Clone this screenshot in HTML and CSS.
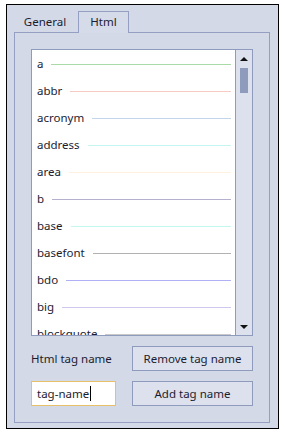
FILE: index.html
```html
<!DOCTYPE html>
<html lang="en">
<head>
    <meta charset="UTF-8">
    <meta name="viewport" content="width=device-width, initial-scale=1.0">
    <title>Html tags</title>
    <link rel="stylesheet" href="styles.css">
</head>
<body>

    <div class="window">
        <div class="tabs">
            <div class="tab">General</div>
            <div class="tab active">Html</div>
        </div>

        <div class="panel">
            <div class="listbox">
                <div class="items">
                    <div class="item" style="--c:#a9dba9"><span>a</span><i></i></div>
                    <div class="item" style="--c:#f7cbc4"><span>abbr</span><i></i></div>
                    <div class="item" style="--c:#c2d5e9"><span>acronym</span><i></i></div>
                    <div class="item" style="--c:#c3f5f3"><span>address</span><i></i></div>
                    <div class="item" style="--c:#fff0df"><span>area</span><i></i></div>
                    <div class="item" style="--c:#b5b0cd"><span>b</span><i></i></div>
                    <div class="item" style="--c:#c2f8ef"><span>base</span><i></i></div>
                    <div class="item" style="--c:#b1b1b1"><span>basefont</span><i></i></div>
                    <div class="item" style="--c:#b0b0f6"><span>bdo</span><i></i></div>
                    <div class="item" style="--c:#d0c6f0"><span>big</span><i></i></div>
                    <div class="item" style="--c:#c8c8c8"><span>blockquote</span><i></i></div>
                </div>
                <div class="scrollbar">
                    <div class="arrow up"></div>
                    <div class="track"><div class="thumb"></div></div>
                    <div class="arrow down"></div>
                </div>
            </div>

            <div class="controls">
                <label class="label" for="tag">Html tag name</label>
                <button class="btn">Remove tag name</button>
                <div class="input" id="tag">tag-name<b class="caret"></b></div>
                <button class="btn">Add tag name</button>
            </div>
        </div>
    </div>

</body>
</html>
```

FILE: styles.css
```css
body {
    margin: 0;
    background: #ffffff;
    font-family: "Noto Sans", "Open Sans", sans-serif;
    font-size: 11.5px;
    color: #1c1c30;
}
.window {
    margin: 4px 0 0 6px;
    width: 256px;
    height: 412px;
    padding: 6px 8px 5px 7px;
    border: 1px solid #000;
    background: #d3d9e7;
}
.tabs {
    display: flex;
    height: 21px;
}
.tab {
    width: 62px;
    padding-top: 3px;
    text-align: center;
    box-sizing: border-box;
}
.tab.active {
    width: 51px;
    height: 22px;
    padding-top: 2px;
    margin-left: 2px;
    border: 1px solid #959fc3;
    border-bottom: none;
    background: #d5dbe8;
    position: relative;
    z-index: 1;
}
.panel {
    box-sizing: border-box;
    height: 391px;
    border: 1px solid #959fc3;
    padding: 16px 16px 0 16px;
}
.listbox {
    display: flex;
    height: 285px;
    border: 1px solid #8e9bbd;
    background: #fff;
}
.items {
    flex: 1;
    overflow: hidden;
}
.item {
    display: flex;
    align-items: center;
    height: 27px;
    padding-left: 5px;
    padding-right: 4px;
}
.item i {
    flex: 1;
    height: 1px;
    margin-left: 8px;
    margin-top: 1px;
    background: var(--c);
}
.scrollbar {
    width: 16px;
    border-left: 1px solid #8e9bbd;
    background: #dde1ee;
    display: flex;
    flex-direction: column;
}
.arrow {
    height: 17px;
    display: flex;
    justify-content: center;
    align-items: center;
}
.arrow::before {
    content: "";
    border-left: 4px solid transparent;
    border-right: 4px solid transparent;
}
.arrow.up::before {
    border-bottom: 4px solid #111;
}
.arrow.down::before {
    border-top: 4px solid #111;
}
.track {
    flex: 1;
    padding: 1px 0 0 4px;
}
.thumb {
    width: 8px;
    height: 25px;
    background: #8e9bbd;
}
.controls {
    display: grid;
    grid-template-columns: 85px 121px;
    grid-template-rows: 25px 25px;
    column-gap: 16px;
    row-gap: 10px;
    margin-top: 10px;
}
.label {
    align-self: center;
}
.btn {
    font: inherit;
    color: inherit;
    border: 1px solid #8e9bbd;
    background: #dde1ee;
    padding: 0;
}
.input {
    display: flex;
    align-items: center;
    border: 1px solid #e6c169;
    background: #fff;
    padding-left: 5px;
}
.caret {
    width: 1px;
    height: 15px;
    background: #000;
    margin-left: 1px;
}
```
